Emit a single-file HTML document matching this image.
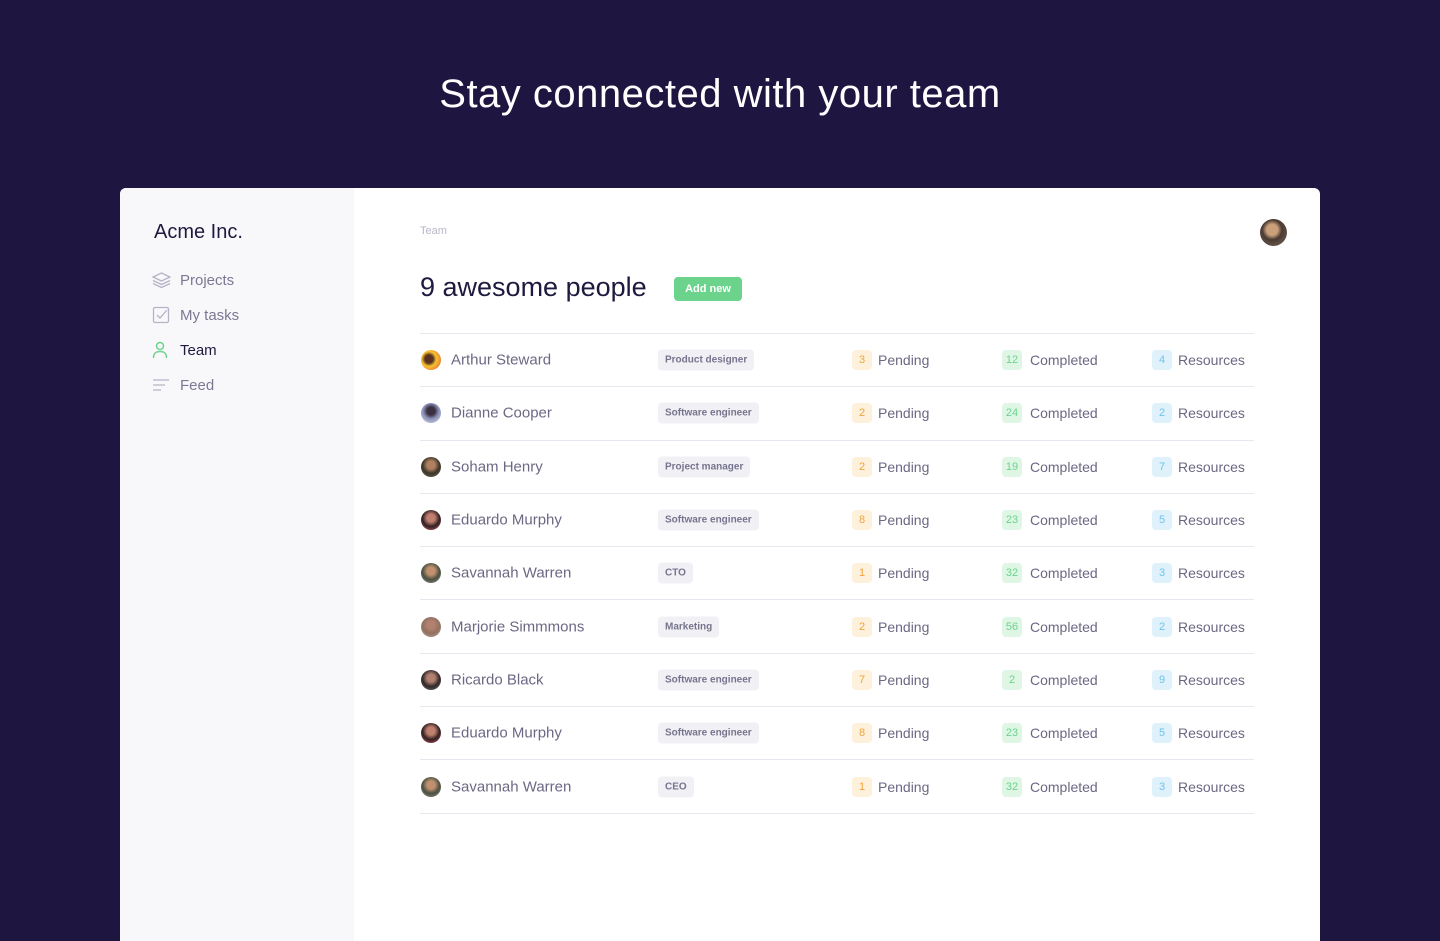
<!DOCTYPE html>
<html><head><meta charset="utf-8"><style>
*{margin:0;padding:0;box-sizing:border-box}
html,body{width:1440px;height:941px;overflow:hidden}
body{background:#1e1640;font-family:"Liberation Sans",sans-serif;position:relative}
h1{position:absolute;top:72px;left:0;width:1440px;text-align:center;color:#fff;font-size:40px;font-weight:500;letter-spacing:0.5px}
.card{position:absolute;left:120px;top:188px;width:1200px;height:753px;background:#fff;border-radius:6px 6px 0 0;overflow:hidden}
.side{position:absolute;left:0;top:0;width:234px;height:100%;background:#f8f8fb}
.brand{position:absolute;left:34px;top:33px;font-size:20px;color:#1e1a3f}
.nav{position:absolute;left:32px;font-size:15px;color:#7c7894;display:flex;align-items:center}
.nav svg{margin-right:9px}
.crumb{position:absolute;left:300px;top:37px;font-size:11px;color:#b8b6c8}
.title{position:absolute;left:300px;top:84px;font-size:27px;color:#1e1a3f;font-weight:500}
.add{position:absolute;left:554px;top:89px;width:68px;height:24px;background:#6bd38c;color:#fff;border-radius:4px;font-size:11px;text-align:center;line-height:24px;font-weight:bold}
.ava{position:absolute;left:1140px;top:31px;width:27px;height:27px;border-radius:50%;background:radial-gradient(circle at 45% 40%,#c9a07a 0 25%,#4a3a32 45%,#7a6a60 100%)}
.table{position:absolute;left:300px;top:145px;width:834px;border-top:1px solid #e8e7ef}
.row{height:53.3px;border-bottom:1px solid #e8e7ef;position:relative;font-size:14px;color:#6c6884}
.row>*{position:absolute;top:50%;transform:translateY(-50%)}
.av{left:1px;width:20px;height:20px;border-radius:50%}
.nm{left:31px;font-size:15px}
.role{left:238px;background:#f0f0f5;border-radius:4px;font-size:10px;font-weight:bold;color:#77748e;padding:5px 7px}
.b{width:20px;height:20px;border-radius:4px;font-size:11px;text-align:center;line-height:20px}
.p{left:432px;background:#fdf1dc;color:#f2a23c}
.c{left:582px;background:#dff6e5;color:#6bd38c}
.r{left:732px;background:#dff1fb;color:#6cc4ec}
.pt{left:458px}.ct{left:610px}.rt{left:758px}
</style></head><body>
<h1>Stay connected with your team</h1>
<div class="card">
<div class="side">
<div class="brand">Acme Inc.</div>
<div class="nav" style="top:83px"><svg width="19" height="18" viewBox="0 0 19 18" fill="none" stroke="#b5b3c6" stroke-width="1.3"><path d="M9.5 2 L18 6 L9.5 10 L1 6Z"/><path d="M1 9.5 L9.5 13.5 L18 9.5"/><path d="M1 12.5 L9.5 16.5 L18 12.5"/></svg>Projects</div>
<div class="nav" style="top:118px"><svg width="19" height="18" viewBox="0 0 19 18" fill="none" stroke="#b5b3c6" stroke-width="1.3"><rect x="1.5" y="1.5" width="15" height="15" rx="1.5"/><path d="M5 9 L8 12 L15 4"/></svg>My tasks</div>
<div class="nav" style="top:153px;color:#1e1a3f"><svg width="19" height="18" viewBox="0 0 19 18" fill="none" stroke="#6bd38c" stroke-width="1.5"><circle cx="8" cy="5" r="3.5"/><path d="M1.5 17 C1.5 12 4 10.5 8 10.5 C12 10.5 14.5 12 14.5 17"/></svg>Team</div>
<div class="nav" style="top:188px"><svg width="19" height="18" viewBox="0 0 19 18" fill="none" stroke="#b5b3c6" stroke-width="1.3"><path d="M1 4H17M1 9H13M1 14H9"/></svg>Feed</div>
</div>
<div class="crumb">Team</div>
<div class="title">9 awesome people</div>
<div class="add">Add new</div>
<div class="ava"></div>
<div class="table">
<div class="row"><div class="av" style="background:radial-gradient(circle at 40% 45%,#5a3020 0 25%,#f4c430 45%,#e64a3a)"></div><div class="nm">Arthur Steward</div><div class="role">Product designer</div><div class="b p">3</div><div class="pt">Pending</div><div class="b c">12</div><div class="ct">Completed</div><div class="b r">4</div><div class="rt">Resources</div></div>
<div class="row"><div class="av" style="background:radial-gradient(circle at 50% 40%,#3a3040 0 25%,#8a90b8 50%,#dde)"></div><div class="nm">Dianne Cooper</div><div class="role">Software engineer</div><div class="b p">2</div><div class="pt">Pending</div><div class="b c">24</div><div class="ct">Completed</div><div class="b r">2</div><div class="rt">Resources</div></div>
<div class="row"><div class="av" style="background:radial-gradient(circle at 50% 40%,#b08060 0 25%,#3a3428 55%,#7a7a60)"></div><div class="nm">Soham Henry</div><div class="role">Project manager</div><div class="b p">2</div><div class="pt">Pending</div><div class="b c">19</div><div class="ct">Completed</div><div class="b r">7</div><div class="rt">Resources</div></div>
<div class="row"><div class="av" style="background:radial-gradient(circle at 50% 40%,#c08070 0 25%,#302020 55%,#e06070)"></div><div class="nm">Eduardo Murphy</div><div class="role">Software engineer</div><div class="b p">8</div><div class="pt">Pending</div><div class="b c">23</div><div class="ct">Completed</div><div class="b r">5</div><div class="rt">Resources</div></div>
<div class="row"><div class="av" style="background:radial-gradient(circle at 50% 40%,#c09070 0 25%,#4a5040 55%,#9a9a90)"></div><div class="nm">Savannah Warren</div><div class="role">CTO</div><div class="b p">1</div><div class="pt">Pending</div><div class="b c">32</div><div class="ct">Completed</div><div class="b r">3</div><div class="rt">Resources</div></div>
<div class="row"><div class="av" style="background:radial-gradient(circle at 50% 40%,#b08070 0 25%,#907060 55%,#c0b0a0)"></div><div class="nm">Marjorie Simmmons</div><div class="role">Marketing</div><div class="b p">2</div><div class="pt">Pending</div><div class="b c">56</div><div class="ct">Completed</div><div class="b r">2</div><div class="rt">Resources</div></div>
<div class="row"><div class="av" style="background:radial-gradient(circle at 50% 40%,#b08070 0 25%,#302828 55%,#807070)"></div><div class="nm">Ricardo Black</div><div class="role">Software engineer</div><div class="b p">7</div><div class="pt">Pending</div><div class="b c">2</div><div class="ct">Completed</div><div class="b r">9</div><div class="rt">Resources</div></div>
<div class="row"><div class="av" style="background:radial-gradient(circle at 50% 40%,#c08070 0 25%,#302020 55%,#e06070)"></div><div class="nm">Eduardo Murphy</div><div class="role">Software engineer</div><div class="b p">8</div><div class="pt">Pending</div><div class="b c">23</div><div class="ct">Completed</div><div class="b r">5</div><div class="rt">Resources</div></div>
<div class="row"><div class="av" style="background:radial-gradient(circle at 50% 40%,#c09070 0 25%,#4a5040 55%,#9a9a90)"></div><div class="nm">Savannah Warren</div><div class="role">CEO</div><div class="b p">1</div><div class="pt">Pending</div><div class="b c">32</div><div class="ct">Completed</div><div class="b r">3</div><div class="rt">Resources</div></div>
</div>
</div>
</body></html>
